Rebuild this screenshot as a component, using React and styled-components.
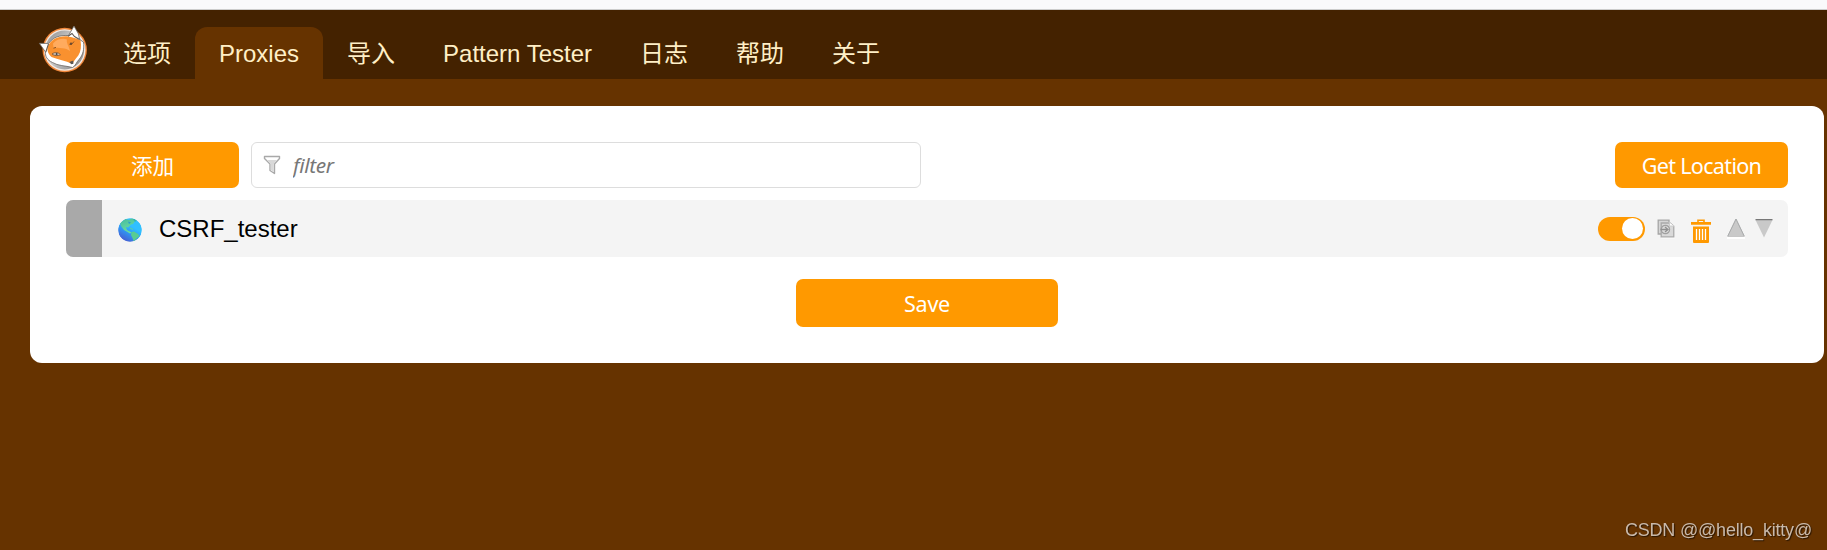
import React, { useState } from 'react'
import styled, { createGlobalStyle } from 'styled-components'

const GlobalStyle = createGlobalStyle`
  * {
    box-sizing: border-box;
  }
  body {
    margin: 0;
    background: #630;
    font-family: 'Liberation Sans', 'Noto Sans CJK SC', sans-serif;
    font-size: 24px;
    color: #000;
    overflow: hidden;
  }
`

const uiFont = `'Noto Sans', 'Noto Sans CJK SC', sans-serif`

const BrowserEdge = styled.div`
  height: 10px;
  background: #f9f9fb;
  border-bottom: 1px solid #ccc;
`

const Nav = styled.nav`
  display: flex;
  align-items: flex-end;
  height: 69px;
  padding-left: 38px;
  background: #420;
`

const Logo = styled.svg`
  width: 51px;
  height: 48px;
  margin: 0 10px 6px 0;
`

const Tab = styled.button`
  height: 52px;
  padding: 2px 24px 0;
  border: 0;
  border-radius: 12px 12px 0 0;
  background: ${props => props.$active ? '#630' : 'transparent'};
  color: #ffefc6;
  font: inherit;
  line-height: 50px;
  white-space: nowrap;
  cursor: pointer;
`

const Panel = styled.main`
  margin: 27px 3px 0 30px;
  height: 257px;
  padding: 36px;
  border-radius: 12px;
  background: #fff;
`

const Toolbar = styled.div`
  display: flex;
  gap: 12px;
  margin-bottom: 12px;
`

const Button = styled.button`
  width: ${props => props.$width || 173}px;
  height: ${props => props.$height || 46}px;
  padding: 2px 0 0;
  border: 0;
  border-radius: 7px;
  background: #f90;
  color: #fff;
  font-family: ${uiFont};
  font-size: 21.6px;
  letter-spacing: ${props => props.$spacing || 0}px;
  line-height: 40px;
  cursor: pointer;
`

const Filter = styled.label`
  display: flex;
  align-items: center;
  width: 670px;
  height: 46px;
  margin-right: auto;
  padding: 0 11px;
  border: 1px solid #ddd;
  border-radius: 6px;
`

const FilterInput = styled.input`
  flex: 1;
  padding: 0;
  margin-left: 12px;
  border: 0;
  outline: 0;
  background: none;
  font-family: ${uiFont};
  font-size: 20.8px;
  letter-spacing: -0.4px;
  &::placeholder {
    color: #777;
    font-style: italic;
    opacity: 1;
  }
`

const ProxyRow = styled.div`
  display: flex;
  align-items: center;
  height: 57px;
  padding-right: 15px;
  border-radius: 7px;
  overflow: hidden;
  background: #f4f4f4;
`

const ColorBar = styled.div`
  width: 36px;
  height: 100%;
  margin-right: 16px;
  background: #a9a9a9;
`

const Flag = styled.svg`
  width: 24px;
  height: 24px;
  margin: 3px 17px 0 0;
`

const Title = styled.span`
  flex: 1;
`

const Toggle = styled.button`
  display: flex;
  justify-content: ${props => props.$on ? 'flex-end' : 'flex-start'};
  align-items: center;
  width: 47px;
  height: 24px;
  margin-right: 12px;
  padding: 0 2px;
  border: 0;
  border-radius: 12px;
  background: ${props => props.$on ? '#f90' : '#ccc'};
  cursor: pointer;
`

const Knob = styled.span`
  width: 21px;
  height: 21px;
  margin-top: -1px;
  border-radius: 50%;
  background: #fff;
`

const Icon = styled.svg`
  flex: none;
  width: ${props => props.$w}px;
  height: ${props => props.$h}px;
  margin: ${props => props.$m || '0'};
`

const SaveRow = styled.div`
  display: flex;
  justify-content: center;
  margin-top: 22px;
`

const Watermark = styled.div`
  position: fixed;
  right: 15px;
  bottom: 9px;
  color: #c9b9aa;
  font-size: 18px;
  letter-spacing: -0.2px;
  line-height: 22px;
  text-shadow: 1px 1px 1px rgba(0, 0, 0, 0.6);
`

const tabs = ['选项', 'Proxies', '导入', 'Pattern Tester', '日志', '帮助', '关于']

const FoxLogo = () => (
  <Logo viewBox="0 0 51 48">
    <defs>
      <linearGradient id="disc" x1="0" y1="0" x2="1" y2="1">
        <stop offset="0" stopColor="#8a8a8a" />
        <stop offset=".45" stopColor="#d0d0d0" />
        <stop offset="1" stopColor="#808080" />
      </linearGradient>
    </defs>
    <circle cx="26.7" cy="25" r="22.2" fill="#f0873a" />
    <circle cx="26.7" cy="25" r="20.8" fill="#f3e9e1" />
    <circle cx="26.7" cy="25" r="19.4" fill="url(#disc)" />
    {/* head */}
    <path d="M1.3 18.3 L10.5 18.5 C15 12.5 21 10 30.5 10.5 L36 1 L40.5 9 L41.5 14.5 L45.5 17 C46.5 24 45 30 41 34.5 C38.5 37 37.5 41 34.5 42.5 C27 40.5 20 41 14.5 37.5 C9 35 7 31 7.5 27 Z" fill="#fff" stroke="#6b6560" strokeWidth=".8" strokeLinejoin="round" />
    <path d="M9.5 21.5 C13.5 14 20 10.6 29.5 11.2 C33 12.4 38 12.5 42.5 15.5 C43.5 21 43 26.5 40.3 30.5 C38.2 33.5 36 35.5 34.5 39 C27 35.5 20.5 35 13.5 32 C10 29 9 25 9.5 21.5Z" fill="#f9912f" />
    <path d="M15 18.5 C19 14 25 13 29 14.5 C28 18 31 21 32 26 C28 22.5 21 23.5 15.5 22.5Z" fill="#ffab5e" />
    {/* ears */}
    <path d="M10.5 18.8 L7.8 27 M30 11.2 L34 8.5 L36.5 11.5 L41.5 14.5" fill="none" stroke="#615b56" strokeWidth="1.1" />
    {/* eyes and nose */}
    <path d="M14 29 C17 26.8 20 27 22.5 29.8 C19.5 31 16.5 31 14 29Z" fill="#d0c3b8" stroke="#7a5230" strokeWidth=".8" />
    <circle cx="18.6" cy="28.9" r="1" fill="#444" />
    <path d="M31.5 19.5 C33 19.5 35 18.5 36 16.5" fill="none" stroke="#8a5526" strokeWidth="1" />
    <circle cx="33" cy="18.8" r="1.2" fill="#6d4a30" />
    <path d="M15.5 23.2 L18 22.4" stroke="#8a5526" strokeWidth="1" />
    <path d="M31.3 37 L35.3 35.5 L35.4 38.8 L33.3 39.2Z" fill="#5a5653" />
  </Logo>
)

const Globe = () => (
  <Flag viewBox="0 0 24 24">
    <defs>
      <linearGradient id="sea" x1=".2" y1="1" x2=".8" y2="0">
        <stop offset="0" stopColor="#4b52cc" />
        <stop offset=".4" stopColor="#2f98f4" />
        <stop offset=".65" stopColor="#30c0ff" />
      </linearGradient>
      <linearGradient id="land" x1="0" y1="0" x2=".4" y2="1">
        <stop offset="0" stopColor="#45b8a0" />
        <stop offset="1" stopColor="#6be09e" />
      </linearGradient>
      <clipPath id="ball"><circle cx="12" cy="12" r="11.8" /></clipPath>
    </defs>
    <g clipPath="url(#ball)">
      <circle cx="12" cy="12" r="12" fill="url(#sea)" />
      <path d="M2 5 L7 1 L11 2 L14 0 L17 3 L15 6 L13 6.5 L10 9.5 L8 9 L9 12 L13.5 14.5 L12 15.5 L6 12 L3 8Z" fill="url(#land)" />
      <path d="M14 0 L19 2 L17 4Z" fill="#35b6ab" />
      <path d="M13.5 14 L16 13.5 L20 16 L21.5 18 L18 21 L16 24 L14.5 20 L13 17Z" fill="#58cc92" />
      <path d="M12 10 L15 11.5" stroke="#5bd49a" />
      <path d="M10 3.5 L13 4.5 L11 6Z" fill="#299dcc" />
    </g>
  </Flag>
)

const FunnelIcon = () => (
  <Icon $w={18} $h={20} viewBox="0 0 18 20">
    <path d="M1.5 1.5 H16.5 V3.5 L11.5 9 V18.5 L7 15.5 V9 L1.5 3.5Z" fill="#fff" stroke="#a9a9a9" strokeWidth="1.4" strokeLinejoin="round" />
    <path d="M4 5 H14 L10.8 9 V17 L7.7 14.8 V9Z" fill="#d8d8d8" />
  </Icon>
)

const DuplicateIcon = () => (
  <Icon $w={18} $h={20} $m="0 16px 0 0" viewBox="0 0 18 20">
    <path d="M4 3.5 H14 L17.8 6 V19.5 H4Z" fill="#fff" opacity=".8" />
    <path d="M4 15 H1.2 V1.2 H12 V3" fill="#d6d6d6" stroke="#a5a5a5" strokeWidth="1.3" />
    <path d="M4.2 4 H13 L16.8 7 V17.8 H4.2Z" fill="#d9d9d9" stroke="#a9a9a9" strokeWidth="1.3" />
    <path d="M12.5 3.5 V7 H17" fill="#fff" stroke="#ccc" />
    <circle cx="8.4" cy="10.5" r="4.2" fill="#ddd" stroke="#a0a0a0" strokeWidth="1.2" />
    <path d="M3.5 10.5 H10 M8 8 L11 10.5 L8 13" fill="none" stroke="#909090" strokeWidth="1.3" />
  </Icon>
)

const TrashIcon = () => (
  <Icon $w={20} $h={24} $m="4px 16px 0 0" viewBox="0 0 20 24">
    <path d="M7 3.5 V1.2 H13 V3.5" fill="none" stroke="#f90" strokeWidth="1.6" />
    <path d="M0 3 H20 V5.8 H0Z M2 7.5 H18 V23 Q18 24 17 24 H3 Q2 24 2 23Z" fill="#f90" />
    <path d="M5.5 10 V21 M8.5 10 V21 M11.5 10 V21 M14.5 10 V21" stroke="#fff" strokeWidth="1.3" />
  </Icon>
)

const UpIcon = () => (
  <Icon $w={18} $h={21} $m="0 10px 0 0" viewBox="0 0 18 21">
    <path d="M0 19 H18 V21 H0Z" fill="#fff" />
    <path d="M9 1 L17.3 18.5 H.7Z" fill="#c9c9c9" stroke="#bbb" strokeWidth=".7" />
    <path d="M.8 18 L9 1 L17.2 18" fill="none" stroke="#a5a7a8" strokeWidth=".9" />
  </Icon>
)

const DownIcon = () => (
  <Icon $w={18} $h={21} viewBox="0 0 18 21">
    <path d="M.5 2 H17.5 L9 19.5Z" fill="#c9c9c9" />
    <path d="M.5 1.6 H17.5" stroke="#777" strokeWidth="1.2" />
  </Icon>
)

export default () => {
    const [tab, setTab] = useState('Proxies');
    const [on, setOn] = useState(true);
    return (
        <>
            <GlobalStyle />
            <BrowserEdge />
            <Nav>
                <FoxLogo />
                {tabs.map(name => (
                    <Tab key={name} $active={tab === name} onClick={() => setTab(name)}>{name}</Tab>
                ))}
            </Nav>
            <Panel>
                <Toolbar>
                    <Button>添加</Button>
                    <Filter>
                        <FunnelIcon />
                        <FilterInput type="text" placeholder="filter" />
                    </Filter>
                    <Button $spacing={-0.7}>Get Location</Button>
                </Toolbar>
                <ProxyRow>
                    <ColorBar />
                    <Globe />
                    <Title>CSRF_tester</Title>
                    <Toggle $on={on} onClick={() => setOn(!on)}><Knob /></Toggle>
                    <DuplicateIcon />
                    <TrashIcon />
                    <UpIcon />
                    <DownIcon />
                </ProxyRow>
                <SaveRow>
                    <Button $width={262} $height={48} $spacing={-0.3}>Save</Button>
                </SaveRow>
            </Panel>
            <Watermark>CSDN @@hello_kitty@</Watermark>
        </>
    );
}
